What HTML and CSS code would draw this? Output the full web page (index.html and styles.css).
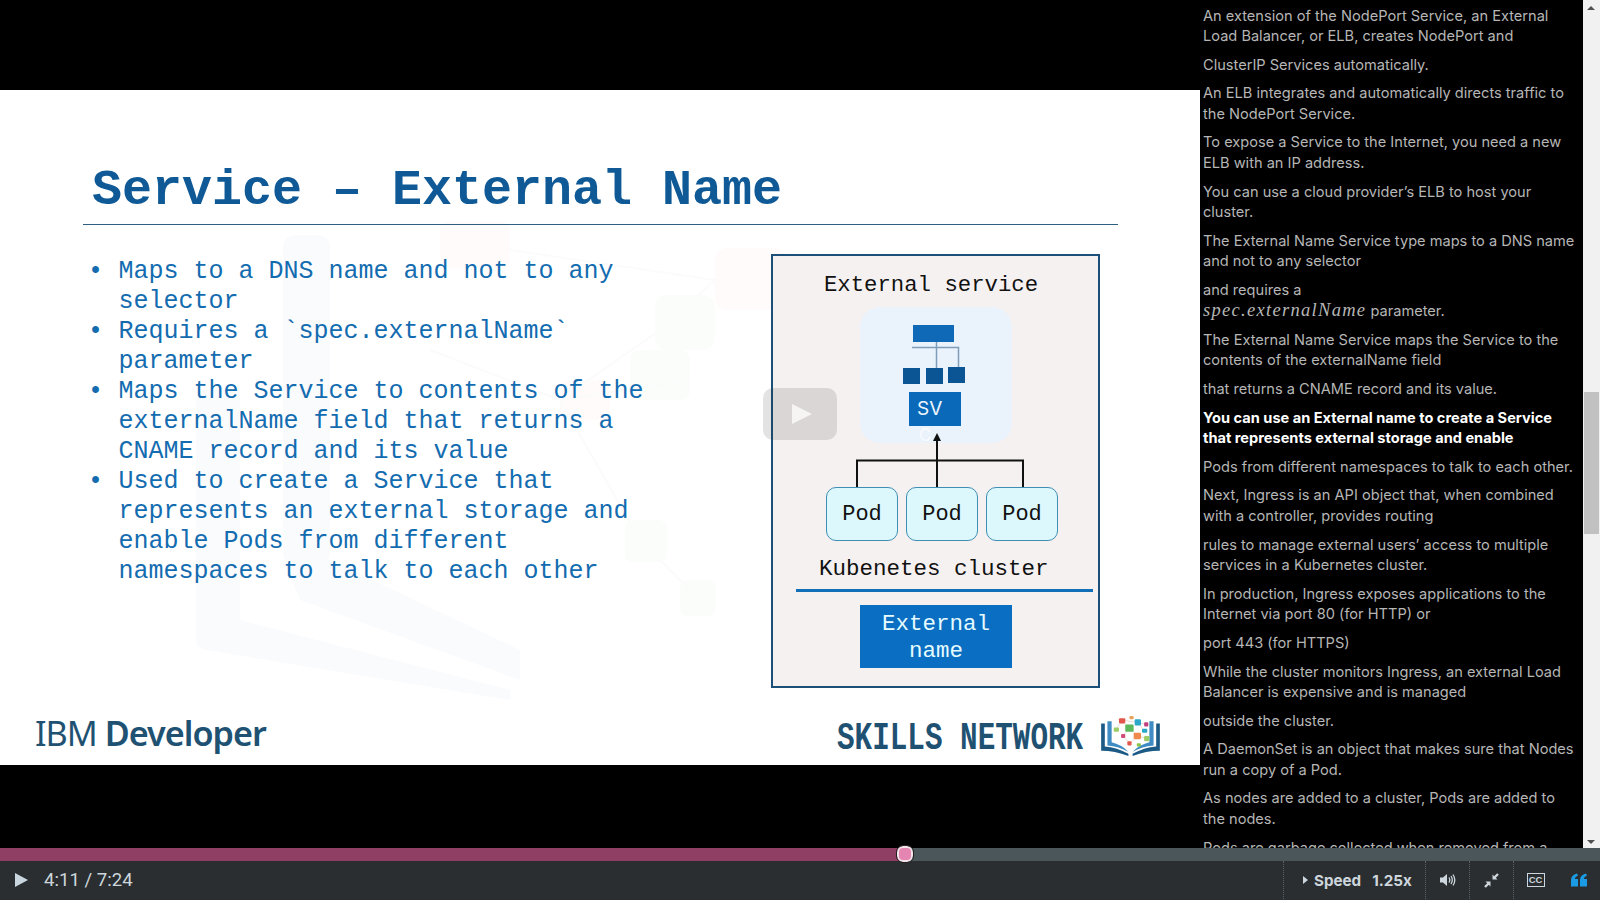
FILE: index.html
```html
<!DOCTYPE html>
<html lang="en">
  <head>
    <meta charset="UTF-8" />
    <meta name="viewport" content="width=device-width, initial-scale=1.0" />
    <title>Service - External Name</title>
    <link rel="stylesheet" href="styles.css">
  </head>
  <body>
    <div class="stage">
      <!-- Video -->
      <section class="video">
        <div class="slide">
          <svg class="watermark" width="1200" height="675" viewBox="0 0 1200 675">
            <g fill="#fafbfd">
              <path d="M196 310 Q196 300 206 300 L240 300 L240 530 L510 600 L510 610 L206 560 Q196 558 196 550 Z" />
              <rect x="283" y="145" width="47" height="330" rx="12" />
              <path d="M283 470 L330 470 L520 560 L520 590 L300 510 Z" />
            </g>
            <g fill="#fffbfa">
              <rect x="440" y="132" width="70" height="46" rx="8" />
              <rect x="715" y="158" width="72" height="62" rx="12" />
              <rect x="560" y="290" width="50" height="40" rx="8" />
            </g>
            <g fill="#fbfdfb">
              <rect x="655" y="205" width="60" height="55" rx="12" />
              <rect x="630" y="260" width="60" height="50" rx="10" />
              <rect x="625" y="430" width="42" height="42" rx="8" />
              <rect x="680" y="490" width="36" height="36" rx="8" />
            </g>
            <g stroke="#fbfbfc" stroke-width="2" fill="none">
              <path d="M510 160 L715 190 L660 240 L560 310 L640 450 L700 510 M430 260 L560 310 L690 290" />
            </g>
          </svg>
          <h1 class="slide-title">Service – External Name</h1>
          <div class="slide-body">
            <ul class="points">
              <li>Maps to a DNS name and not to any selector</li>
              <li>Requires a `spec.externalName` parameter</li>
              <li>Maps the Service to contents of the externalName field that returns a CNAME record and its value</li>
              <li>Used to create a Service that represents an external storage and enable Pods from different namespaces to talk to each other</li>
            </ul>
            <div class="diagram">
              <div class="diagram-title">External service</div>
              <div class="svc-panel">
                <svg class="svc-tree" width="152" height="85" viewBox="0 0 152 85">
                  <path d="M52 40.5 H98.5 V61 M76.5 35 V61" fill="none" stroke="#7d9db8" stroke-width="1.5" />
                  <rect x="53" y="18" width="41" height="17" fill="#0f69b7" />
                  <rect x="43" y="61" width="17" height="16" fill="#0b5595" />
                  <rect x="66" y="61" width="17" height="16" fill="#0b5595" />
                  <rect x="88" y="60" width="17" height="16" fill="#0b5595" />
                </svg>
                <div class="svc-box">SV</div>
                <div class="svc-ghost">C</div>
              </div>
              <div class="pods">
                <svg class="pods-lines" width="328" height="60" viewBox="0 0 328 60">
                  <path d="M84 56 V27.5 H250 V56 M164 56 V5" fill="none" stroke="#111" stroke-width="2" />
                  <path d="M164 0 L160 8 H168 Z" fill="#111" />
                </svg>
                <div class="pod">Pod</div>
                <div class="pod">Pod</div>
                <div class="pod">Pod</div>
              </div>
              <div class="cluster-label">Kubenetes cluster</div>
              <div class="cluster-rule"></div>
              <div class="ext-name">External<br />name</div>
            </div>
          </div>
          <footer class="slide-footer">
            <div class="ibm-logo">IBM <b>Developer</b></div>
            <div class="skills-logo">
              <span class="skills-text">SKILLS NETWORK</span>
              <svg width="65" height="42" viewBox="0 0 62 40">
                <path d="M3 8 H6.5 V30 Q18 31 29 37 V39 Q16 34 3 34 Z" fill="#1c5a86" />
                <path d="M59 8 H55.5 V30 Q44 31 33 37 V39 Q46 34 59 34 Z" fill="#1c5a86" />
                <path d="M9 6 H13 V26 Q22 28 29 35 Q20 30 9 29 Z" fill="#3f8cc4" />
                <path d="M53 6 H49 V26 Q40 28 33 35 Q42 30 53 29 Z" fill="#3f8cc4" />
                <g stroke="#d9c9c0" stroke-width="0.6">
                  <path d="M17 14 L23 5 L38 7 L46 9 M23 5 L30 12 L38 20 L46 22 M30 12 L24 20 L30 27 L38 20 M44 15 L38 7" fill="none" />
                </g>
                <rect x="20" y="3" width="6" height="5" rx="1" fill="#e2574c" />
                <rect x="35" y="4" width="6" height="6" rx="1" fill="#2aa7c9" />
                <rect x="26" y="9" width="8" height="7" rx="1" fill="#5cb85c" />
                <rect x="30" y="1" width="4" height="3" rx="1" fill="#e8a35a" />
                <rect x="15" y="12" width="5" height="4" rx="1" fill="#9ccc65" />
                <rect x="34" y="17" width="7" height="6" rx="1" fill="#ef8a4c" />
                <rect x="44" y="7" width="4" height="4" rx="1" fill="#c2407e" />
                <rect x="42" y="13" width="5" height="4" rx="1" fill="#2aa7c9" />
                <rect x="22" y="18" width="4" height="4" rx="1" fill="#d14a7a" />
                <rect x="44" y="20" width="5" height="5" rx="1" fill="#9ccc65" />
                <rect x="28" y="25" width="4" height="4" rx="1" fill="#e2574c" />
                <rect x="37" y="27" width="4" height="3" rx="1" fill="#8bc34a" />
              </svg>
            </div>
          </footer>
          <div class="play-ghost"><span class="play-ghost-arrow"></span></div>
        </div>
      </section>

      <!-- Transcript -->
      <aside class="transcript">
        <p>An extension of the NodePort Service, an External Load Balancer, or ELB, creates NodePort and</p>
        <p>ClusterIP Services automatically.</p>
        <p>An ELB integrates and automatically directs traffic to the NodePort Service.</p>
        <p>To expose a Service to the Internet, you need a new ELB with an IP address.</p>
        <p>You can use a cloud provider’s ELB to host your cluster.</p>
        <p>The External Name Service type maps to a DNS name and not to any selector</p>
        <p>and requires a<br /><i class="math">spec.externalName</i> parameter.</p>
        <p>The External Name Service maps the Service to the contents of the externalName field</p>
        <p>that returns a CNAME record and its value.</p>
        <p class="current">You can use an External name to create a Service that represents external storage and enable</p>
        <p>Pods from different namespaces to talk to each other.</p>
        <p>Next, Ingress is an API object that, when combined with a controller, provides routing</p>
        <p>rules to manage external users’ access to multiple services in a Kubernetes cluster.</p>
        <p>In production, Ingress exposes applications to the Internet via port 80 (for HTTP) or</p>
        <p>port 443 (for HTTPS)</p>
        <p>While the cluster monitors Ingress, an external Load Balancer is expensive and is managed</p>
        <p>outside the cluster.</p>
        <p>A DaemonSet is an object that makes sure that Nodes run a copy of a Pod.</p>
        <p>As nodes are added to a cluster, Pods are added to the nodes.</p>
        <p>Pods are garbage collected when removed from a</p>
      </aside>

      <div class="scrollbar">
        <span class="scroll-up"></span>
        <span class="scroll-thumb"></span>
        <span class="scroll-down"></span>
      </div>
    </div>

    <!-- Player controls -->
    <div class="progress">
      <div class="progress-played"></div>
      <div class="progress-handle"></div>
    </div>
    <div class="controls">
      <span class="play-btn"></span>
      <span class="time">4:11 / 7:24</span>
      <div class="control-speed">
        <span class="speed-caret"></span>
        <b>Speed</b>
        <b class="speed-value">1.25x</b>
      </div>
      <div class="control-btn">
        <svg width="16" height="14" viewBox="0 0 16 14">
          <path d="M0 4.5 H3 L7 1 V13 L3 9.5 H0 Z" fill="#ccd6dc" />
          <path d="M9 4.5 Q10.6 7 9 9.5 M11 3 Q13.6 7 11 11 M13 1.5 Q16.6 7 13 12.5" fill="none" stroke="#ccd6dc" stroke-width="1.3" />
        </svg>
      </div>
      <div class="control-btn">
        <svg width="15" height="15" viewBox="0 0 15 15">
          <path d="M14 1 L10.5 4.5 M1 14 L4.5 10.5" stroke="#ccd6dc" stroke-width="2.4" />
          <path d="M8.5 1.5 V6.5 H13.5 Z M6.5 13.5 V8.5 H1.5 Z" fill="#ccd6dc" />
        </svg>
      </div>
      <div class="control-btn">
        <div class="cc-icon">CC</div>
      </div>
      <div class="control-quote">
        <svg width="16" height="14" viewBox="0 0 16 13">
          <path d="M0 13 V6.5 Q0 1.5 6 0 L7 2 Q4 3 3.8 5.5 H7 V13 Z M9 13 V6.5 Q9 1.5 15 0 L16 2 Q13 3 12.8 5.5 H16 V13 Z" fill="#1b9be3" />
        </svg>
      </div>
    </div>
  </body>
</html>
```

FILE: styles.css
```css
* {
  box-sizing: border-box;
}
body {
  margin: 0;
  width: 1600px;
  height: 900px;
  overflow: hidden;
  background-color: #000;
  font-family: Inter, "Liberation Sans", sans-serif;
}
.stage {
  display: flex;
  height: 848px;
}

/* Video */
.video {
  width: 1200px;
  flex: none;
  padding-top: 90px;
}
.slide {
  position: relative;
  height: 675px;
  background-color: #fff;
  font-family: "Liberation Mono", monospace;
  overflow: hidden;
}
.watermark {
  position: absolute;
  top: 0;
  left: 0;
}
.slide-title {
  position: relative;
  margin: 0 0 0 83px;
  width: 1035px;
  height: 135px;
  padding: 74px 0 0 9px;
  border-bottom: 1px solid #2f5f80;
  font-size: 50px;
  line-height: 54px;
  font-weight: bold;
  color: #0f5a96;
}
.slide-body {
  position: relative;
  display: flex;
  height: 470px;
  padding-top: 29px;
}
.points {
  list-style: none;
  margin: 3px 0 0 88px;
  padding: 0;
  width: 683px;
  flex: none;
  font-size: 25px;
  line-height: 30px;
  color: #136cb0;
}
.points li {
  display: flex;
  width: 560px;
}
.points li::before {
  content: "•";
  flex: none;
  width: 30.5px;
}

/* Diagram */
.diagram {
  width: 329px;
  height: 434px;
  flex: none;
  border: 2px solid #1d5079;
  background-color: #f6f1f1;
  font-size: 21px;
  color: #111;
}
.diagram-title {
  margin-top: 16px;
  height: 35px;
  line-height: 26px;
  text-align: center;
  padding-right: 9px;
  font-size: 22.3px;
}
.svc-panel {
  position: relative;
  width: 152px;
  height: 136px;
  margin-left: 87px;
  border-radius: 20px;
  background-color: #eaf2fc;
}
.svc-tree {
  display: block;
}
.svc-box {
  width: 52px;
  height: 34px;
  margin-left: 49px;
  padding-left: 8px;
  background-color: #0a69b8;
  color: #eef6ff;
  font-family: Inter, sans-serif;
  font-size: 19px;
  line-height: 34px;
}
.svc-ghost {
  position: absolute;
  top: 118px;
  left: 59px;
  color: #fff;
  opacity: 0.7;
  font-family: Inter, sans-serif;
  font-size: 17px;
}
.pods {
  position: relative;
  display: flex;
  gap: 8px;
  margin: 44px 0 0 53px;
}
.pods-lines {
  position: absolute;
  top: -54px;
  left: -53px;
}
.pod {
  position: relative;
  width: 72px;
  height: 54px;
  border: 1.5px solid #3f8fb5;
  border-radius: 10px;
  background-color: #dcf8fc;
  font-size: 22px;
  line-height: 53px;
  text-align: center;
}
.cluster-label {
  margin-top: 13px;
  padding-left: 46px;
  font-size: 22.5px;
  line-height: 30px;
}
.cluster-rule {
  margin: 5px 5px 0 23px;
  height: 3px;
  background-color: #1270b8;
}
.ext-name {
  width: 152px;
  height: 63px;
  margin: 13px 0 0 87px;
  padding-top: 6px;
  background-color: #0a6fc2;
  color: #e6fbff;
  font-size: 22.5px;
  line-height: 27px;
  text-align: center;
}

/* Footer logos */
.slide-footer {
  position: absolute;
  left: 0;
  right: 0;
  bottom: 0;
  height: 65px;
  display: flex;
  justify-content: space-between;
  padding: 0 37px 0 35px;
}
.ibm-logo {
  padding-top: 8px;
  font-family: "Noto Sans", sans-serif;
  font-size: 34.2px;
  line-height: 50px;
  letter-spacing: -1px;
  color: #1f5272;
}
.ibm-logo b {
  font-weight: 600;
}
.skills-logo {
  display: flex;
  align-items: center;
  gap: 15px;
  height: 62px;
  padding-top: 9px;
}
.skills-text {
  display: inline-block;
  width: 246px;
  font-size: 29.3px;
  font-weight: bold;
  color: #1f5272;
  white-space: nowrap;
  transform: translateY(3px) scaleY(1.35);
}
.play-ghost {
  position: absolute;
  top: 298px;
  left: 763px;
  width: 74px;
  height: 52px;
  display: flex;
  align-items: center;
  justify-content: center;
  padding-left: 4px;
  border-radius: 10px;
  background-color: rgba(40, 40, 40, 0.13);
}
.play-ghost-arrow {
  width: 0;
  height: 0;
  border-left: 20px solid #f7f4f4;
  border-top: 10px solid transparent;
  border-bottom: 10px solid transparent;
}

/* Transcript */
.transcript {
  width: 383px;
  flex: none;
  padding: 5.5px 5px 0 3px;
  overflow: hidden;
  font-size: 14.6px;
  line-height: 20.4px;
  color: #b6b6b6;
}
.transcript p {
  margin: 0 0 8.3px;
}
.transcript .current {
  color: #fff;
  font-weight: 700;
}
.math {
  font-family: "Liberation Serif", serif;
  font-size: 18.5px;
  letter-spacing: 1.3px;
}

/* Scrollbar */
.scrollbar {
  position: relative;
  width: 17px;
  flex: none;
  background-color: #f1f1f1;
}
.scroll-up,
.scroll-down {
  position: absolute;
  left: 4px;
  width: 0;
  height: 0;
  border-left: 4px solid transparent;
  border-right: 4px solid transparent;
}
.scroll-up {
  top: 6px;
  border-bottom: 4px solid #505050;
}
.scroll-down {
  bottom: 4px;
  border-top: 4px solid #505050;
}
.scroll-thumb {
  position: absolute;
  top: 392px;
  left: 1px;
  width: 15px;
  height: 142px;
  background-color: #c1c1c1;
}

/* Player controls */
.progress {
  position: relative;
  height: 13px;
  background-color: #4b565b;
}
.progress-played {
  width: 905px;
  height: 100%;
  background-color: #8f3f63;
}
.progress-handle {
  position: absolute;
  top: -2px;
  left: 897px;
  width: 16px;
  height: 16px;
  border: 2px solid #f3e4ea;
  border-radius: 6px;
  outline: 1px solid #222;
  background-color: #e586b2;
}
.controls {
  display: flex;
  align-items: center;
  height: 39px;
  padding-bottom: 1px;
  background-color: #2a2e31;
  color: #cdd6dc;
}
.play-btn {
  flex: none;
  width: 0;
  height: 0;
  margin-left: 15px;
  border-left: 13px solid #c9d6dd;
  border-top: 7px solid transparent;
  border-bottom: 7px solid transparent;
}
.time {
  margin-left: 16px;
  font-family: Roboto, sans-serif;
  font-size: 18.6px;
}
.control-speed {
  display: flex;
  align-items: center;
  height: 100%;
  width: 142px;
  margin-left: auto;
  padding-left: 19px;
  border-left: 1px dotted #5a6166;
  font-size: 15.2px;
}
.speed-caret {
  width: 0;
  height: 0;
  margin-right: 6px;
  border-left: 5px solid #cdd6dc;
  border-top: 4.5px solid transparent;
  border-bottom: 4.5px solid transparent;
}
.speed-value {
  margin-left: 11px;
}
.control-btn {
  display: flex;
  align-items: center;
  justify-content: center;
  width: 44px;
  height: 100%;
  border-left: 1px dotted #5a6166;
}
.control-quote {
  display: flex;
  align-items: center;
  justify-content: center;
  width: 43px;
  height: 100%;
}
.cc-icon {
  width: 18px;
  height: 14px;
  border: 1.5px solid #ccd6dc;
  font-family: "Liberation Sans", sans-serif;
  font-size: 9.5px;
  font-weight: bold;
  line-height: 11px;
  text-align: center;
}
```
